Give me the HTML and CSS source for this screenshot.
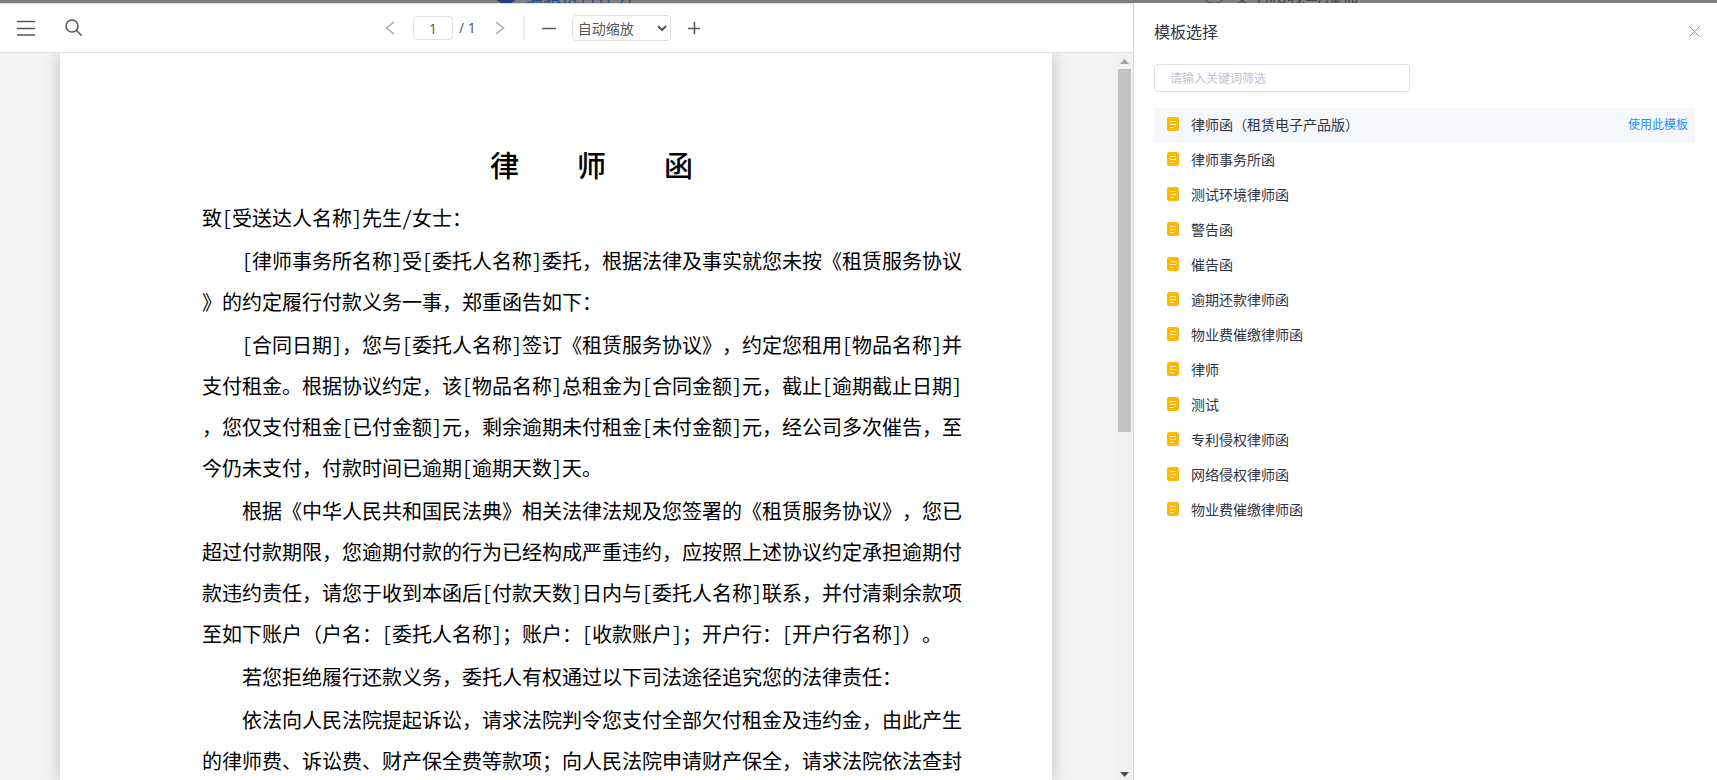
FILE: index.html
```
<!DOCTYPE html>
<html lang="zh-CN">
<head>
<meta charset="utf-8">
<title>模板选择</title>
<link rel="stylesheet" href="styles.css">
</head>
<body>
<div class="backdrop" aria-hidden="true">
  <span class="step step-active"><span class="dot"></span>编辑执行任务</span>
  <span class="step step-next"><span class="dot"></span>文书和我与拜师</span>
</div>
<div class="layout">
  <main class="reader">
    <header class="toolbar">
      <div class="tools">
        <button class="icon-btn" type="button" aria-label="目录"><svg width="18" height="16" viewBox="0 0 18 16"><path d="M0 1.5h18M0 8.5h18M0 15h18"/></svg></button>
        <button class="icon-btn" type="button" aria-label="搜索"><svg width="18" height="18" viewBox="0 0 18 18"><circle cx="7" cy="7" r="6"/><path d="M11.3 11.3l5.4 5.4"/></svg></button>
      </div>
      <div class="pager">
        <button class="icon-btn faint" type="button" aria-label="上一页"><svg width="10" height="14" viewBox="0 0 10 14"><path d="M9 1L1.5 7L9 13"/></svg></button>
        <label class="page-no"><input type="text" value="1" aria-label="页码"><span>/ 1</span></label>
        <button class="icon-btn faint" type="button" aria-label="下一页"><svg width="10" height="14" viewBox="0 0 10 14"><path d="M1 1l7.500 6L1 13"/></svg></button>
        <span class="divider"></span>
        <button class="icon-btn" type="button" aria-label="缩小"><svg width="14" height="14" viewBox="0 0 14 14"><path d="M0 7.500h14"/></svg></button>
        <select aria-label="缩放"><option>自动缩放</option></select>
        <button class="icon-btn" type="button" aria-label="放大"><svg width="14" height="14" viewBox="0 0 14 14"><path d="M1 7.500h12M7.500 1v12"/></svg></button>
      </div>
    </header>
    <div class="viewer">
      <div class="canvas">
        <article class="paper">
          <h1>律　　师　　函</h1>
          <p class="salute">致<span class="field">[受送达人名称]</span>先生<span class="field">/</span>女士：</p>
          <p><span class="field">[律师事务所名称]</span>受<span class="field">[委托人名称]</span>委托，根据法律及事实就您未按《租赁服务协议》的约定履行付款义务一事，郑重函告如下：</p>
          <p><span class="field">[合同日期]</span>，您与<span class="field">[委托人名称]</span>签订《租赁服务协议》，约定您租用<span class="field">[物品名称]</span>并支付租金。根据协议约定，该<span class="field">[物品名称]</span>总租金为<span class="field">[合同金额]</span>元，截止<span class="field">[逾期截止日期]</span>，您仅支付租金<span class="field">[已付金额]</span>元，剩余逾期未付租金<span class="field">[未付金额]</span>元，经公司多次催告，至今仍未支付，付款时间已逾期<span class="field">[逾期天数]</span>天。</p>
          <p>根据《中华人民共和国民法典》相关法律法规及您签署的《租赁服务协议》，您已超过付款期限，您逾期付款的行为已经构成严重违约，应按照上述协议约定承担逾期付款违约责任，请您于收到本函后<span class="field">[付款天数]</span>日内与<span class="field">[委托人名称]</span>联系，并付清剩余款项至如下账户（户名：<span class="field">[委托人名称]</span>；账户：<span class="field">[收款账户]</span>；开户行：<span class="field">[开户行名称]</span>）。</p>
          <p>若您拒绝履行还款义务，委托人有权通过以下司法途径追究您的法律责任：</p>
          <p>依法向人民法院提起诉讼，请求法院判令您支付全部欠付租金及违约金，由此产生的律师费、诉讼费、财产保全费等款项；向人民法院申请财产保全，请求法院依法查封</p>
        </article>
      </div>
      <div class="scrollbar" aria-hidden="true">
        <svg class="up" width="9" height="5" viewBox="0 0 9 5"><path d="M0 5L4.500 0L9 5z"/></svg>
        <div class="track"><div class="thumb"></div></div>
        <svg class="down" width="9" height="5" viewBox="0 0 9 5"><path d="M0 0L4.500 5L9 0z"/></svg>
      </div>
    </div>
  </main>
  <aside class="panel">
    <header class="panel-head">
      <h2>模板选择</h2>
      <button class="close" type="button" aria-label="关闭"><svg width="11" height="11" viewBox="0 0 11 11"><path d="M.5 .5l10 10M10.500 .5l-10 10"/></svg></button>
    </header>
    <input class="filter" type="text" placeholder="请输入关键词筛选" aria-label="请输入关键词筛选">
    <svg class="defs" width="0" height="0"><symbol id="doc" viewBox="0 0 12 14"><rect width="12" height="14" rx="2.500" fill="#ffb800"/><path d="M3 4.500h6M3 7.500h6M3 10.500h4" stroke="#fff" stroke-opacity=".8" stroke-width="1.200"/></symbol></svg>
    <ul class="templates">
      <li class="current"><svg class="doc"><use href="#doc"/></svg><span>律师函（租赁电子产品版）</span><a href="#use">使用此模板</a></li>
      <li><svg class="doc"><use href="#doc"/></svg><span>律师事务所函</span></li>
      <li><svg class="doc"><use href="#doc"/></svg><span>测试环境律师函</span></li>
      <li><svg class="doc"><use href="#doc"/></svg><span>警告函</span></li>
      <li><svg class="doc"><use href="#doc"/></svg><span>催告函</span></li>
      <li><svg class="doc"><use href="#doc"/></svg><span>逾期还款律师函</span></li>
      <li><svg class="doc"><use href="#doc"/></svg><span>物业费催缴律师函</span></li>
      <li><svg class="doc"><use href="#doc"/></svg><span>律师</span></li>
      <li><svg class="doc"><use href="#doc"/></svg><span>测试</span></li>
      <li><svg class="doc"><use href="#doc"/></svg><span>专利侵权律师函</span></li>
      <li><svg class="doc"><use href="#doc"/></svg><span>网络侵权律师函</span></li>
      <li><svg class="doc"><use href="#doc"/></svg><span>物业费催缴律师函</span></li>
    </ul>
  </aside>
</div>
</body>
</html>
```
FILE: styles.css
```
* { box-sizing: border-box; }
body {
  margin: 0;
  height: 100vh;
  display: flex;
  flex-direction: column;
  overflow: hidden;
  background: #fff;
  color: #303342;
  font-family: "Noto Sans CJK SC", sans-serif;
  font-size: 14px;
  line-height: 20px;
}
h1, h2, p, ul { margin: 0; padding: 0; font-weight: 400; }
button { border: 0; padding: 0; background: none; cursor: pointer; }
svg { display: block; }

.backdrop {
  flex: none;
  height: 3px;
  overflow: hidden;
  background: #7f7f7f;
  display: grid;
  grid-template-columns: 492px 708px 1fr;
  align-items: start;
  font-size: 18px;
}
.step { display: flex; align-items: flex-end; gap: 5px; height: 30px; margin-top: -24px; }
.step-active { grid-column: 2; color: #1d4f8c; }
.step-next { grid-column: 3; color: #4a4a4a; }
.dot { width: 28px; height: 28px; margin-bottom: 2px; border-radius: 50%; border: 1px solid #4a4a4a; }
.step-active .dot { background: #1c3f80; border-color: #1c3f80; }

.layout { flex: 1; min-height: 0; display: flex; }
.reader {
  flex: 1;
  min-width: 0;
  display: flex;
  flex-direction: column;
  border-right: 1px solid #d4d4d4;
}
.toolbar {
  flex: none;
  height: 50px;
  display: flex;
  align-items: center;
  padding: 0 17px;
  border-top: 1px solid #dcdcdc;
  border-bottom: 1px solid #e2e2e2;
}
.tools { display: flex; align-items: center; gap: 30px; }
.icon-btn svg { fill: none; stroke: #555; stroke-width: 1.5; }
.icon-btn.faint svg { stroke: #aaa; }
.pager {
  display: flex;
  align-items: center;
  gap: 16px;
  margin-left: 302px;
  color: #555;
}
.page-no {
  display: flex;
  align-items: center;
  gap: 6px;
  margin: 0 3px 0 2px;
  font-family: "Open Sans", sans-serif;
}
.page-no input {
  width: 40px;
  height: 24px;
  border: 1px solid #e0e0e0;
  border-radius: 4px;
  text-align: center;
  font: inherit;
  color: inherit;
}
.divider { width: 2px; height: 24px; margin: 0 1px 0 2px; background: #eaeaea; }
select {
  width: 99px;
  height: 26px;
  padding: 0 0 0 1px;
  border: 1px solid #e0e0e0;
  border-radius: 4px;
  background: #fff;
  color: #555;
  font-family: inherit;
  font-size: 14px;
}

.viewer { flex: 1; min-height: 0; display: flex; background: #f3f3f3; }
.canvas { flex: 1; min-width: 0; overflow: hidden; padding: 0 64px 0 60px; }
.paper {
  min-height: 100%;
  padding: 91px 88px 0 142px;
  background: #fff;
  box-shadow: 0 0 16px rgba(0, 0, 0, .22);
  color: #000;
  font-size: 20px;
  line-height: 41px;
  line-break: anywhere;
  text-spacing-trim: space-all;
}
.paper h1 {
  padding-left: 17px;
  margin-bottom: 12px;
  text-align: center;
  font-size: 29px;
  font-weight: 500;
  line-height: 41px;
}
.paper p { margin-bottom: 2px; text-indent: 2em; }
.paper .salute { text-indent: 0; }
.field { font-feature-settings: "hwid"; }

.scrollbar {
  flex: none;
  width: 17px;
  display: flex;
  flex-direction: column;
  align-items: center;
  padding: 6px 2px 3px;
  background: #f1f1f1;
}
.up { fill: #a3a3a3; }
.down { fill: #505050; }
.track { flex: 1; width: 100%; padding: 5px 0; }
.thumb { height: 52%; background: #c1c1c1; }

.panel { flex: none; width: 583px; padding: 0 22px 0 20px; }
.panel-head {
  display: flex;
  align-items: center;
  justify-content: space-between;
  height: 56px;
  margin-right: -5px;
}
.panel h2 { font-size: 16px; line-height: 24px; }
.close svg { fill: none; stroke: #999; stroke-width: 1; }
.filter {
  display: block;
  width: 256px;
  height: 28px;
  margin: 5px 0 16px;
  padding: 0 15px 1px;
  border: 1px solid #dcdfe6;
  border-radius: 4px;
  font-family: inherit;
  font-size: 12px;
}
.filter::placeholder { color: #c0c4cc; }
.defs { position: absolute; }
.templates { list-style: none; }
.templates li {
  display: flex;
  align-items: center;
  height: 35px;
  padding: 0 7px 3px 13px;
}
.templates .current { background: #f5f7fa; }
.doc { width: 12px; height: 14px; margin-right: 12px; }
.templates a { margin-left: auto; color: #1890ff; font-size: 12px; text-decoration: none; }
```
